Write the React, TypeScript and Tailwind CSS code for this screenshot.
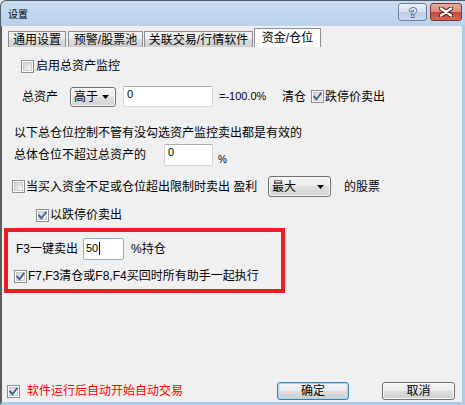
import React from 'react';

const font = "font-['Liberation_Sans','Noto_Sans_CJK_SC',sans-serif]";

function Check({ checked }: { checked?: boolean }) {
  return (
    <span className="relative inline-block w-[13px] h-[13px] shrink-0 border border-[#8e8f8f] bg-white p-[1px]">
      <span className="block w-full h-full border border-[#c9c9c9] bg-linear-to-br from-[#d2d2d2] to-[#f8f8f8]" />
      {checked && (
        <svg className="absolute left-0 top-0" width="11" height="11" viewBox="0 0 11 11">
          <path d="M2.2 5.6 L4.4 8.2 L8.8 2.4" stroke="#3f5a9a" strokeWidth="1.8" fill="none" strokeLinecap="square" />
        </svg>
      )}
    </span>
  );
}

function Combo({ label, className }: { label: string; className: string }) {
  return (
    <div
      className={`flex items-center rounded-[3px] border border-[#707070] bg-[linear-gradient(#f4f4f4_0%,#ececec_50%,#dfdfdf_50%,#d2d2d2_100%)] shadow-[inset_0_0_0_1px_#fbfbfb] ${className}`}
    >
      <span className="pl-[3px] text-[12px] leading-[14px]">{label}</span>
      <svg className="ml-auto mr-[6px]" width="7" height="4" viewBox="0 0 7 4">
        <path d="M0 0h7L3.5 4z" fill="#000" />
      </svg>
    </div>
  );
}

function Field({ value, className }: { value: string; className: string }) {
  return (
    <div
      className={`rounded-[2px] border border-[#d2d5d9] border-t-[#abadb3] bg-white pl-[3px] pt-[1px] text-[11px] leading-[13px] ${className}`}
    >
      {value}
    </div>
  );
}

function Button({ label, primary, className }: { label: string; primary?: boolean; className: string }) {
  return (
    <div
      className={`flex items-center justify-center rounded-[3px] border bg-[linear-gradient(#f3f3f3_0%,#ebebeb_50%,#dddddd_50%,#cfcfcf_100%)] text-[12px] leading-[14px] ${
        primary ? 'border-[#3c7fb1] shadow-[inset_0_0_0_1px_#9fd8f7]' : 'border-[#707070] shadow-[inset_0_0_0_1px_#fafafa]'
      } ${className}`}
    >
      {label}
    </div>
  );
}

function TitleBar() {
  return (
    <div className="h-[26px] shrink-0 flex items-start rounded-tl-[6px] border-t border-l border-[#4f5a66] bg-linear-to-b from-[#c9dcf0] to-[#b9d1ea]">
      <span className="ml-[7px] mt-[8px] text-[10px] leading-[11px]">设置</span>
      <div className="ml-auto mt-[2px] mr-[3px] flex gap-[3px]">
        <div className="w-[29px] h-[18px] rounded-[3px] border border-[#6d7e96] bg-[linear-gradient(#e9f0f8_0%,#d6e2f0_50%,#bccee6_50%,#c9daee_100%)] flex items-center justify-center">
          <svg width="12" height="14" viewBox="0 0 12 14">
            <text
              x="6"
              y="12"
              textAnchor="middle"
              fontFamily="Liberation Sans, sans-serif"
              fontWeight="bold"
              fontSize="13"
              fill="#f4f7fb"
              stroke="#3b4a5f"
              strokeWidth="1.4"
              paintOrder="stroke"
            >
              ?
            </text>
          </svg>
        </div>
        <div className="w-[32px] h-[18px] rounded-[3px] border border-[#7a332b] bg-[linear-gradient(#e6aa9f_0%,#d98b7d_50%,#c0473a_50%,#cf6a55_100%)] flex items-center justify-center">
          <svg width="14" height="10" viewBox="0 0 14 10">
            <path d="M2 1.5 L12 8.5 M12 1.5 L2 8.5" stroke="#4a1712" strokeWidth="4.4" strokeLinecap="round" />
            <path d="M2 1.5 L12 8.5 M12 1.5 L2 8.5" stroke="#ffffff" strokeWidth="2.4" strokeLinecap="round" />
          </svg>
        </div>
      </div>
    </div>
  );
}

const tabs = [
  { label: '通用设置', w: 'ml-[6px] w-[58px]' },
  { label: '预警/股票池', w: 'ml-[2px] w-[75px]' },
  { label: '关联交易/行情软件', w: 'ml-[1px] w-[109px]' },
];

export default function App() {
  return (
    <div className={`w-[465px] h-[405px] flex flex-col overflow-hidden bg-[#f0f0f0] text-black text-[12px] ${font}`}>
      <TitleBar />
      <div className="flex-1 flex flex-col border-l-2 border-l-[#5d5d5d] border-r-[3px] border-r-[#aecbea] border-b-[3px] border-b-[#aecbea]">
        {/* tabs */}
        <div className="h-[21px] shrink-0 flex items-end">
          {tabs.map((t) => (
            <div
              key={t.label}
              className={`h-[16px] flex items-center justify-center border border-b-0 border-[#898c95] bg-[linear-gradient(#f3f3f3_0%,#ebebeb_50%,#dddddd_50%,#cfcfcf_100%)] leading-[14px] ${t.w}`}
            >
              {t.label}
            </div>
          ))}
          <div className="ml-[1px] w-[67px] h-[19px] flex items-center justify-center border border-b-0 border-[#898c95] bg-white leading-[14px]">
            资金/仓位
          </div>
        </div>

        <div className="mt-[10px] h-[18px] flex items-center pl-[19px]">
          <Check />
          <span className="ml-[2px] leading-[14px]">启用总资产监控</span>
        </div>

        <div className="mt-[11px] h-[21px] flex items-center pl-[20px]">
          <span className="w-[48px] leading-[14px]">总资产</span>
          <Combo label="高于" className="w-[46px] h-[20px]" />
          <Field value="0" className="ml-[7px] w-[90px] h-[21px]" />
          <span className="ml-[6px] w-[63px] text-[11px] leading-[13px]">=-100.0%</span>
          <span className="w-[29px] leading-[14px]">清仓</span>
          <Check checked />
          <span className="ml-[1px] leading-[14px]">跌停价卖出</span>
        </div>

        <div className="mt-[17px] h-[18px] flex items-center pl-[12px]">
          <span className="leading-[14px]">以下总仓位控制不管有没勾选资产监控卖出都是有效的</span>
        </div>

        <div className="mt-[2px] h-[22px] flex items-center pl-[12px]">
          <span className="w-[150px] leading-[14px]">总体仓位不超过总资产的</span>
          <Field value="0" className="w-[49px] h-[22px]" />
          <span className="ml-[5px] self-end mb-[1px] text-[10px] leading-[10px]">%</span>
        </div>

        <div className="mt-[10px] h-[21px] flex items-center pl-[10px]">
          <Check />
          <span className="ml-[1px] w-[242px] leading-[14px]">当买入资金不足或仓位超出限制时卖出 盈利</span>
          <Combo label="最大" className="w-[63px] h-[21px]" />
          <span className="ml-[13px] leading-[14px]">的股票</span>
        </div>

        <div className="mt-[9px] h-[18px] flex items-center pl-[34px]">
          <Check checked />
          <span className="ml-[1px] leading-[14px]">以跌停价卖出</span>
        </div>

        <div className="mt-[4px] ml-[2px] w-[281px] h-[65px] flex flex-col border-4 border-[#ed1c24]">
          <div className="mt-[6px] h-[22px] flex items-center pl-[8px]">
            <span className="w-[67px] leading-[14px]">F3一键卖出</span>
            <div className="w-[41px] h-[22px] flex items-start rounded-[2px] border border-[#7eb4ea] bg-white pl-[2px] pt-[3px] text-[11px] leading-[13px]">
              50
              <span className="ml-[1px] w-px h-[13px] bg-black" />
            </div>
            <span className="ml-[7px] leading-[14px]">%持仓</span>
          </div>
          <div className="mt-[7px] h-[18px] flex items-center pl-[6px]">
            <Check checked />
            <span className="ml-[1px] leading-[14px]">F7,F3清仓或F8,F4买回时所有助手一起执行</span>
          </div>
        </div>

        <div className="mt-auto mb-[2px] h-[18px] flex items-center pl-[5px] pr-[7px]">
          <Check checked />
          <span className="ml-[7px] leading-[14px] text-[#ff0000]">软件运行后自动开始自动交易</span>
          <Button label="确定" primary className="ml-auto w-[72px] h-[18px]" />
          <Button label="取消" className="ml-[33px] w-[73px] h-[18px]" />
        </div>
      </div>
    </div>
  );
}
